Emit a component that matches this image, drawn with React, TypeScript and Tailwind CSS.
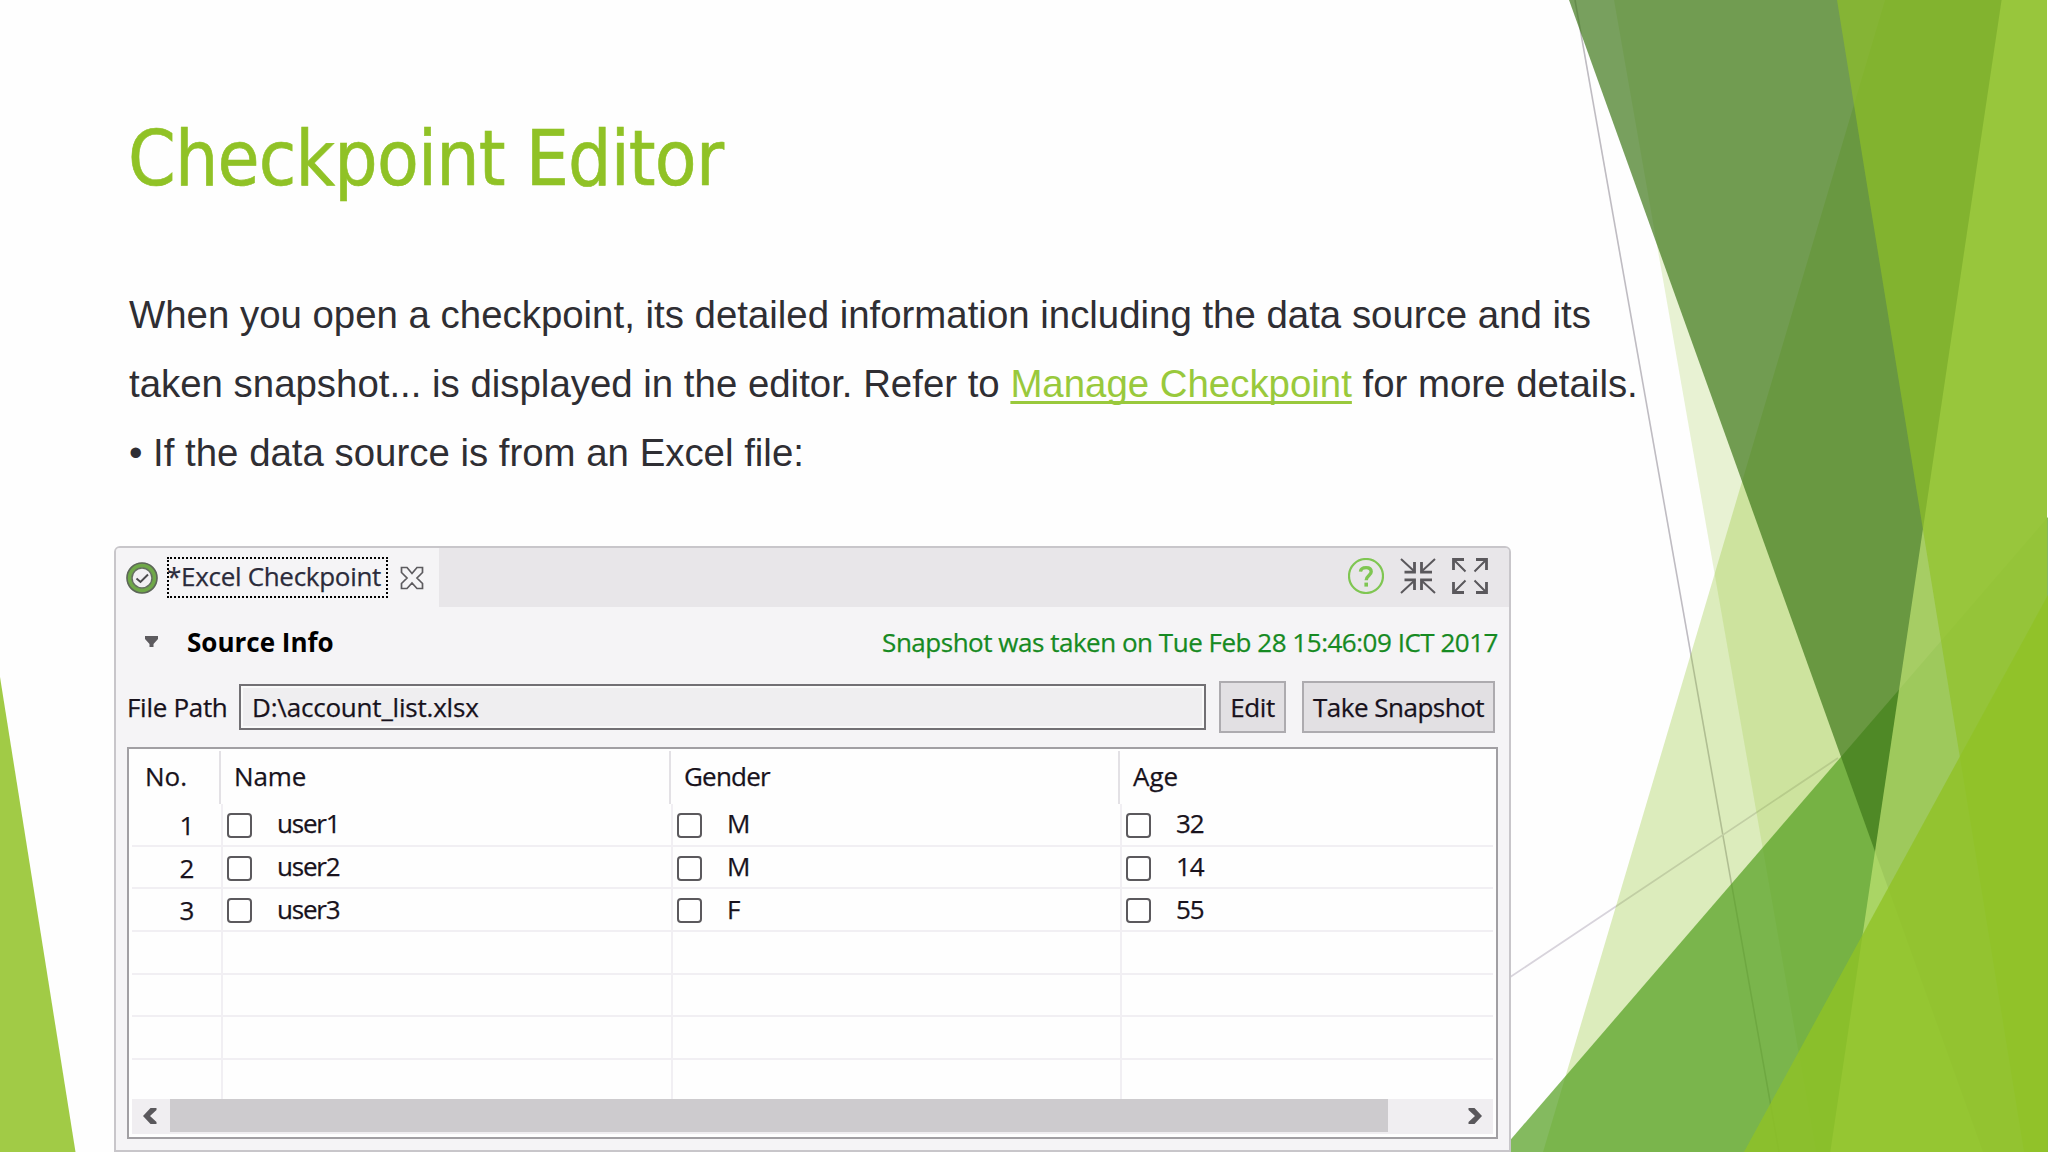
const users = [
  { no: 1, name: "user1", gender: "M", age: "32" },
  { no: 2, name: "user2", gender: "M", age: "14" },
  { no: 3, name: "user3", gender: "F", age: "55" },
];

function Facets() {
  return (
    <svg className="absolute inset-0 h-full w-full" viewBox="0 0 2048 1152" aria-hidden="true">
      <path d="M1575 0L1779 1152" stroke="#bfbcc2" strokeWidth="1.6" />
      <path d="M1400 1048.5L1511 976.5L1838 758" stroke="#d8d4dc" strokeWidth="1.8" fill="none" />
      <path d="M1885 0H2047V1152H1543Z" fill="#90c226" fillOpacity="0.3" />
      <path d="M1614 0H2047V1152H1816Z" fill="#90c226" fillOpacity="0.2" />
      <path d="M2048 517V1152H1500Z" fill="#54a021" fillOpacity="0.72" />
      <path d="M1569 0H2047V1152H1983Z" fill="#3f7819" fillOpacity="0.7" />
      <path d="M2001.6 0H2047V1152H1830.3Z" fill="#c0e474" fillOpacity="0.7" />
      <path d="M1837 0H2047V1152H2024Z" fill="#90c226" fillOpacity="0.65" />
      <path d="M2048 595V1152H1744Z" fill="#90c226" fillOpacity="0.8" />
      <path d="M0 677L75.5 1152H0Z" fill="#90c226" fillOpacity="0.85" />
    </svg>
  );
}

function CheckpointIcon() {
  return (
    <svg className="h-8 w-8 shrink-0" viewBox="0 0 32 32" fill="none">
      <circle cx="16" cy="16" r="12.7" stroke="#6fa848" strokeWidth="5" />
      <circle cx="16" cy="16" r="15" stroke="#5d6659" strokeWidth="1.6" />
      <circle cx="16" cy="16" r="10" fill="#f1f0f2" stroke="#64705f" strokeWidth="1.5" />
      <path d="M10.5 16.5L14.5 20L22 12.5" stroke="#4a4a4c" strokeWidth="2" />
    </svg>
  );
}

function CloseIcon() {
  return (
    <svg className="h-6 w-6" viewBox="0 0 24 24" fill="none">
      <path
        d="M1.5 1.5H7L12 7.5L17 1.5H22.5V6.5L17 12L22.5 17.5V22.5H17L12 17L7 22.5H1.5V17.5L7 12L1.5 6.5Z"
        stroke="#5d5b5f"
        strokeWidth="1.7"
      />
    </svg>
  );
}

function HelpIcon() {
  return (
    <svg className="h-9 w-9" viewBox="0 0 36 36" fill="none">
      <circle cx="18" cy="18" r="17" stroke="#7fc652" strokeWidth="2.2" />
      <path
        d="M12.5 13.6C12.8 10.6 15 9.6 18.2 9.6C21.4 9.6 23.2 11 23.2 13.8C23.2 17.4 18.2 17.6 18.2 22.2"
        stroke="#7fc652"
        strokeWidth="3.4"
      />
      <path d="M16.4 24.6H20V28.6H16.4Z" fill="#7fc652" />
    </svg>
  );
}

function CollapseIcon() {
  return (
    <svg className="h-9 w-9" viewBox="0 0 36 36" fill="none" stroke="#5a585c">
      <path d="M1 1L15 14M35 1L21 14M1 35L15 22M35 35L21 22" strokeWidth="2" />
      <path d="M14.5 4V14.2H4.5M21.5 4V14.2H32M14.5 32V21.8H4.5M21.5 32V21.8H32" strokeWidth="2.8" />
    </svg>
  );
}

function ExpandIcon() {
  return (
    <svg className="h-9 w-9" viewBox="0 0 36 36" fill="none" stroke="#5a585c">
      <path d="M1.5 1.5L13.5 13.5M34.5 1.5L22.5 13.5M1.5 34.5L13.5 22.5M34.5 34.5L22.5 22.5" strokeWidth="2" />
      <path d="M1.5 12V1.5H12M24 1.5H34.5V12M1.5 24V34.5H12M24 34.5H34.5V24" strokeWidth="2.8" />
    </svg>
  );
}

function Cell({ value }: { value: string }) {
  return (
    <>
      <span className="mt-0.5 ml-[4px] h-[25px] w-[25px] shrink-0 rounded-[4px] border-2 border-[#5b595d] bg-white" />
      <span className="-mt-[2px] ml-[25px] tracking-[-1.2px]">{value}</span>
    </>
  );
}

function DataTable() {
  return (
    <div className="mx-[11px] mt-[14px] flex h-[392px] flex-col border-2 border-[#a19fa3] bg-[#fefefe] px-[3px]">
      <div className="flex h-[55px] shrink-0 pt-[2px] leading-[51px]">
        <div className="w-[89px] border-r-2 border-[#e3e1e5] pl-[13px] tracking-normal">No.</div>
        <div className="w-[450px] border-r-2 border-[#e3e1e5] pl-[13px] tracking-[-0.1px]">Name</div>
        <div className="w-[449px] border-r-2 border-[#e3e1e5] pl-[13px] tracking-[-0.8px]">Gender</div>
        <div className="pl-[13px] tracking-normal">Age</div>
      </div>
      <div className="min-h-0 flex-1 overflow-hidden">
        {Array.from({ length: 7 }, (_, i) => {
          const user = users[i];
          return (
            <div key={i} className="flex h-[42.7px] border-b-2 border-[#f1eff3]">
              <div className="flex w-[91px] items-center justify-end border-r-2 border-[#f1eff3] pt-px pr-[27px]">
                {user?.no}
              </div>
              <div className="flex w-[450px] items-center border-r-2 border-[#f1eff3]">
                {user && <Cell value={user.name} />}
              </div>
              <div className="flex w-[449px] items-center border-r-2 border-[#f1eff3]">
                {user && <Cell value={user.gender} />}
              </div>
              <div className="flex items-center">{user && <Cell value={user.age} />}</div>
            </div>
          );
        })}
      </div>
      <div className="mb-[3px] flex h-[35px] shrink-0 items-center bg-[#f0eef1]">
        <svg className="mb-0.5 ml-[10px] h-4 w-4" viewBox="0 0 16 16" fill="#5a585c">
          <path d="M8.5 0H14.5V2L8 8L14.5 14V16H8.5L1 8Z" />
        </svg>
        <div className="mb-0.5 ml-[12px] h-[33px] w-[1218px] bg-[#cdcbce]" />
        <svg className="mb-0.5 ml-[80px] h-4 w-4" viewBox="0 0 16 16" fill="#5a585c">
          <path d="M0.5 0H6.5L14 8L6.5 16H0.5V14L7 8L0.5 2Z" />
        </svg>
      </div>
    </div>
  );
}

function CheckpointPanel() {
  return (
    <section className="mt-[57px] -ml-[15px] h-[606px] w-[1397px] rounded-t-[6px] border-2 border-[#c8c6ca] bg-[#f5f4f6] font-['Open_Sans',sans-serif] text-[26px] leading-[36px] tracking-[-0.4px] whitespace-nowrap text-[#18121c] [-webkit-text-stroke:0.25px]">
      <header className="flex h-[59px] rounded-t-[4px] bg-[#e8e6e9]">
        <div className="flex w-[323px] items-center rounded-tl-[4px] bg-[#f5f4f6] pl-[10px]">
          <CheckpointIcon />
          <div className="ml-[9px] flex h-[41px] w-[221px] items-center border-2 border-dotted border-black pb-[3px] text-[#2b2b3b] tracking-[-0.3px]">
            <span className="-ml-[2px]">*Excel Checkpoint</span>
          </div>
          <div className="ml-[12px]">
            <CloseIcon />
          </div>
        </div>
        <div className="flex flex-1 items-center justify-end gap-[16px] pr-[21px] pb-[3px]">
          <HelpIcon />
          <CollapseIcon />
          <ExpandIcon />
        </div>
      </header>
      <div className="flex h-[74px] items-center pr-[11px] pb-[5px] pl-[28px]">
        <svg className="h-3 w-[15px]" viewBox="0 0 15 12" fill="#5d5b5f">
          <path d="M1 0H14V3L9.5 8V11H5.5V8L1 3Z" />
        </svg>
        <h2 className="ml-[28px] font-bold tracking-normal text-black [-webkit-text-stroke:0px]">Source Info</h2>
        <p className="ml-auto tracking-[-0.48px] text-[#168a22]">
          Snapshot was taken on Tue Feb 28 15:46:09 ICT 2017
        </p>
      </div>
      <div className="flex h-[52px] items-center pl-[10px]">
        <span className="w-[113px] pl-px tracking-[-0.3px]">File Path</span>
        <div className="flex h-[46px] w-[967px] items-center border-2 border-[#727074] bg-[#efeef0] pl-[11px] tracking-[-0.2px] shadow-[inset_0_0_0_2px_#fafafa]">
          D:\account_list.xlsx
        </div>
        <button className="ml-[13px] h-[52px] w-[67px] border-2 border-[#adabaf] bg-[#e2e0e3]">Edit</button>
        <button className="ml-[16px] h-[52px] w-[193px] border-2 border-[#adabaf] bg-[#e2e0e3] tracking-[-0.5px]">
          Take Snapshot
        </button>
      </div>
      <DataTable />
    </section>
  );
}

export default function App() {
  return (
    <main className="relative h-[1152px] w-[2048px] overflow-hidden bg-[#fefefe]">
      <Facets />
      <div className="relative pt-[121px] pl-[129px]">
        <h1 className="-ml-px font-['DejaVu_Sans_Condensed','DejaVu_Sans',sans-serif] text-[76px] leading-[76px] tracking-[-0.8px] text-[#90c226] [-webkit-text-stroke:0.6px]">
          Checkpoint Editor
        </h1>
        <div className="mt-[83px] h-[209px] font-['Liberation_Sans',sans-serif] text-[38.4px] leading-[69.2px] whitespace-nowrap text-[#2f2e33]">
          <p>When you open a checkpoint, its detailed information including the data source and its</p>
          <p>
            taken snapshot... is displayed in the editor. Refer to{" "}
            <a className="text-[#99c93c] underline decoration-[3px] underline-offset-[4px] [text-decoration-skip-ink:none]">
              Manage Checkpoint
            </a>{" "}
            for more details.
          </p>
          <p>• If the data source is from an Excel file:</p>
        </div>
        <CheckpointPanel />
      </div>
    </main>
  );
}
